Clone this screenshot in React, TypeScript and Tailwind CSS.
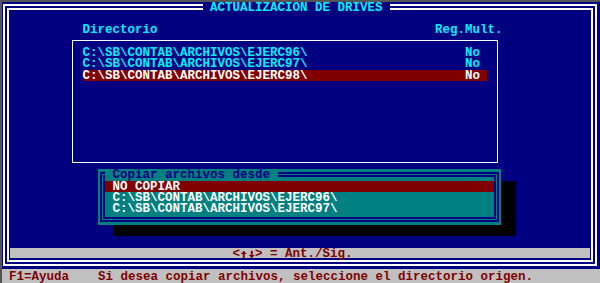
import React from "react";

const dirs = [
  "C:\\SB\\CONTAB\\ARCHIVOS\\EJERC96\\",
  "C:\\SB\\CONTAB\\ARCHIVOS\\EJERC97\\",
  "C:\\SB\\CONTAB\\ARCHIVOS\\EJERC98\\",
];

const origins = ["NO COPIAR", dirs[0], dirs[1]];

// Flecha de la fuente DOS (arriba / abajo)
function Arrow({ down }: { down?: boolean }) {
  return (
    <svg width="7.5" height="9" viewBox="0 0 8 9" className={down ? "mt-[2px] rotate-180" : "mt-[2px]"}>
      <path d="M4 0.5 L7.2 4 L5 4 L5 8.5 L3 8.5 L3 4 L0.8 4 Z" fill="#800000" />
    </svg>
  );
}

export default function App() {
  const current = 2;
  const origin = 0;

  return (
    <div className="w-[600px] h-[283px] overflow-hidden bg-[#000080] border-t-2 border-l-2 border-[#555555] font-['Liberation_Mono',monospace] font-bold text-[12.5px] leading-[13px] whitespace-pre">
      {/* Marco principal doble */}
      <div className="relative ml-[1px] mt-[2px] w-[594px] h-[262px] border-[6px] border-double border-white flex flex-col">
        <span className="absolute left-[193.5px] -top-[8px] h-[11.3px] px-[7.5px] bg-[#000080] text-[#00f0ff]">
          ACTUALIZACION DE DRIVES
        </span>

        {/* Cabecera columnas */}
        <div className="flex mt-[14px] ml-[73.5px] h-[11.3px] text-[#00f0ff]">
          <span className="w-[352.5px]">Directorio</span>
          <span>Reg.Mult.</span>
        </div>

        {/* Lista de directorios */}
        <div className="ml-[63px] mt-[5.2px] w-[426px] h-[122.5px] border border-white pt-[5.5px] pl-[9.5px]">
          {dirs.map((d, i) => (
            <div
              key={d}
              className={
                i === current
                  ? "flex w-[404px] h-[11.3px] bg-[#800000] text-white"
                  : "flex w-[404px] h-[11.3px] text-[#00f0ff]"
              }
            >
              <span className="w-[382.5px]">{d}</span>
              <span>No</span>
            </div>
          ))}
        </div>

        {/* Ventana: copiar archivos desde */}
        <div className="relative ml-[89px] mt-[6px] w-[403px] h-[56px]">
          <div className="absolute left-[15px] top-[12px] w-[403px] h-[55.5px] bg-black" />
          <div className="relative w-full h-full bg-[#008080] px-[2px] py-[3px]">
            <div className="w-full h-full border-2 border-[#000080] p-[1px]">
              <div className="w-full h-full border-2 border-[#000080] pt-[4px]">
                {origins.map((o, i) => (
                  <div
                    key={o}
                    className={
                      i === origin
                        ? "h-[11px] pl-[7.5px] bg-[#800000] text-white"
                        : "h-[11.3px] pl-[7.5px] text-white"
                    }
                  >
                    {o}
                  </div>
                ))}
              </div>
            </div>
            <span className="absolute left-[7px] top-0 h-[11.3px] w-[172.5px] px-[7.5px] bg-[#008080] text-[#000080]">
              Copiar archivos desde
            </span>
          </div>
        </div>

        {/* Barra de teclas */}
        <div className="flex ml-[1px] mt-[23px] w-[580px] h-[10.5px] bg-[#c0c0c0] pl-[222.5px] text-[#800000]">
          <span>{"<"}</span>
          <Arrow />
          <Arrow down />
          <span>{"> = Ant./Sig."}</span>
        </div>
      </div>

      {/* Línea de estado */}
      <div className="flex mt-[3px] h-[14px] bg-[#c0c0c0] pt-[2px] pl-[7px] text-[#800000]">
        <span className="w-[89px]">F1=Ayuda</span>
        <span>Si desea copiar archivos, seleccione el directorio origen.</span>
      </div>
    </div>
  );
}
